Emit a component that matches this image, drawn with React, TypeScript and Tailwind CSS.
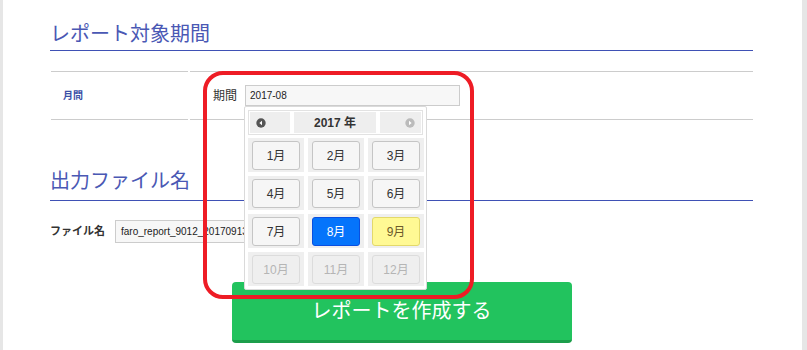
import React from 'react';

const font = "font-['Liberation_Sans','Noto_Sans_CJK_JP',sans-serif]";

type MonthState = 'normal' | 'selected' | 'current' | 'disabled';

const months: { label: string; state: MonthState }[] = [
  { label: '1月', state: 'normal' },
  { label: '2月', state: 'normal' },
  { label: '3月', state: 'normal' },
  { label: '4月', state: 'normal' },
  { label: '5月', state: 'normal' },
  { label: '6月', state: 'normal' },
  { label: '7月', state: 'normal' },
  { label: '8月', state: 'selected' },
  { label: '9月', state: 'current' },
  { label: '10月', state: 'disabled' },
  { label: '11月', state: 'disabled' },
  { label: '12月', state: 'disabled' },
];

const monthStyles: Record<MonthState, string> = {
  normal: 'bg-[#f6f6f6] border-[#c5c5c5] text-[#333]',
  selected: 'bg-[#0574fb] border-[#0a4fe0] text-white',
  current: 'bg-[#fff994] border-[#e3d96a] text-[#6b5a2a]',
  disabled: 'bg-[#efefef] border-[#dcdcdc] text-[#b5b5b5]',
};

const CircleArrow: React.FC<{ dir: 'left' | 'right'; color: string }> = ({ dir, color }) => (
  <svg width="10" height="10" viewBox="0 0 10 10">
    <circle cx="5" cy="5" r="4.7" fill={color} />
    {dir === 'left' ? (
      <path d="M6 2.8 L3.4 5 L6 7.2 Z" fill="#fff" />
    ) : (
      <path d="M4 2.8 L6.6 5 L4 7.2 Z" fill="#fff" />
    )}
  </svg>
);

const MonthPicker: React.FC = () => (
  <div className="absolute left-[-1px] top-[21px] w-[183px] h-[184px] bg-white border border-[#dadada] rounded-[2px] pt-[3px] px-[3px] z-10">
    {/* header */}
    <div className="flex gap-[4px] border border-[#e2e2e2] p-[1px] h-[25px]">
      <div className="w-[40px] bg-[#eee] flex items-center pl-[6px]">
        <CircleArrow dir="left" color="#555" />
      </div>
      <div className="w-[83px] bg-[#eee] flex items-center justify-center text-[12px] font-bold text-[#333]">
        2017 年
      </div>
      <div className="w-[41px] bg-[#eee] flex items-center justify-end pr-[6px]">
        <CircleArrow dir="right" color="#bbb" />
      </div>
    </div>
    {/* months */}
    <div className="grid grid-cols-[56px_56px_56px] gap-[4px] mt-[3px]">
      {months.map((m) => (
        <div key={m.label} className="bg-[#efefef] h-[34px] pt-[3px] px-[4px]">
          <div
            className={`h-[29px] border rounded-[3px] flex items-center justify-center text-[12px] ${monthStyles[m.state]}`}
          >
            {m.label}
          </div>
        </div>
      ))}
    </div>
  </div>
);

export default function App() {
  return (
    <div className={`w-[807px] h-[350px] bg-[#e6e6e6] flex overflow-hidden ${font}`}>
      <div className="relative ml-[3px] w-[799px] h-full bg-white pl-[47px] pr-[49px]">
        {/* section 1 */}
        <h2 className="pt-[20px] pb-[2px] text-[20px] leading-[28px] text-[#4a58b4] border-b border-[#3f51b5]">
          レポート対象期間
        </h2>

        <div className="flex gap-[2px] mt-[20px] ml-[1px]">
          <div className="w-[137px] h-[49px] border-y border-[#cccccc] flex items-center pl-[12px] text-[10px] font-bold text-[#3b4fa6]">
            月間
          </div>
          <div className="flex-1 h-[49px] border-y border-[#cccccc] flex items-center pl-[23px]">
            <span className="text-[12px] text-[#333] mr-[8px]">期間</span>
            <div className="relative">
              <div className="w-[215px] h-[21px] bg-[#f7f7f7] border border-[#cccccc] flex items-center pl-[4px] text-[10px] text-[#222]">
                2017-08
              </div>
              <MonthPicker />
            </div>
          </div>
        </div>

        {/* section 2 */}
        <h2 className="mt-[47px] pb-[5px] text-[20px] leading-[28px] text-[#4a58b4] border-b border-[#3f51b5]">
          出力ファイル名
        </h2>

        <div className="flex items-center mt-[19px]">
          <span className="text-[11px] font-bold text-[#333] w-[65px]">ファイル名</span>
          <div className="w-[230px] h-[23px] bg-[#f7f7f7] border border-[#cccccc] flex items-center pl-[5px] text-[10px] text-[#222] overflow-hidden whitespace-nowrap">
            faro_report_9012_20170913
          </div>
        </div>

        <button className="block mx-auto mt-[39px] w-[340px] h-[61px] bg-[#22c35e] border-b-[3px] border-[#1c9e4b] rounded-[4px] text-white text-[20px]">
          レポートを作成する
        </button>

        {/* red annotation */}
        <div className="absolute left-[200px] top-[71px] w-[271px] h-[228px] border-[4px] border-[#ee1c25] rounded-[20px] z-20 pointer-events-none" />
      </div>
    </div>
  );
}
